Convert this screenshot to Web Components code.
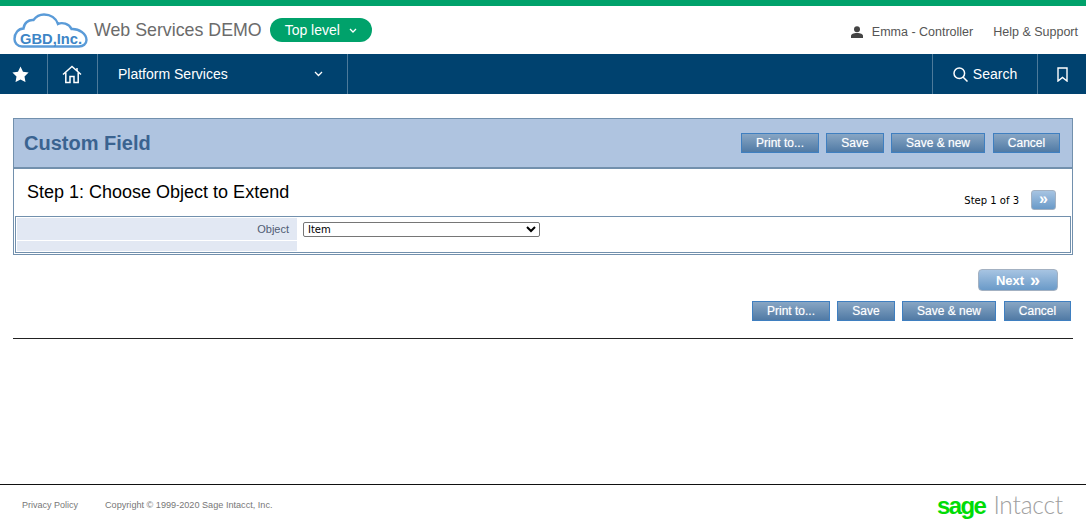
<!DOCTYPE html>
<html>
<head>
<meta charset="utf-8">
<title>Custom Field</title>
<style>
  html, body { margin: 0; height: 100%; }
  body { font-family: "Liberation Sans", Arial, sans-serif; background: #fff; }
</style>
</head>
<body>
<app-shell>
  <top-header slot="header"></top-header>
  <main-nav slot="header"></main-nav>
  <form-panel heading="Custom Field" step-title="Step 1: Choose Object to Extend" step-text="Step 1 of 3">
    <action-buttons slot="actions"></action-buttons>
    <field-row label="Object">
      <select>
        <option>Item</option>
      </select>
    </field-row>
  </form-panel>
  <form-footer>
    <next-button></next-button>
    <action-buttons></action-buttons>
  </form-footer>
  <page-footer slot="footer"></page-footer>
</app-shell>

<script>
class AppShell extends HTMLElement {
  connectedCallback() {
    this.attachShadow({ mode: 'open' });
    this.shadowRoot.innerHTML = `
      <style>
        :host { display: flex; flex-direction: column; height: 523px; overflow: hidden; }
        main { flex: 1; padding: 24px 13px 0; }
      </style>
      <slot name="header"></slot>
      <main><slot></slot></main>
      <slot name="footer"></slot>
    `;
  }
}

class TopHeader extends HTMLElement {
  connectedCallback() {
    this.attachShadow({ mode: 'open' });
    this.shadowRoot.innerHTML = `
      <style>
        :host {
          display: flex;
          align-items: center;
          height: 48px;
          border-top: 6px solid #00a26b;
          padding: 0 8px 0 13px;
          background: #fff;
          font-family: "Liberation Sans", Arial, sans-serif;
        }
        .logo { display: block; margin-top: 2px; }
        .title { margin-left: 6px; font-size: 17.800px; color: #6b6b6b; white-space: nowrap; }
        .pill {
          display: flex;
          align-items: center;
          height: 24px;
          margin-left: 8px;
          padding: 0 15px 0 15px;
          border-radius: 12px;
          background: #00a26b;
          color: #fff;
          font-size: 14px;
        }
        .pill svg { margin-left: 9px; }
        .right { margin-left: auto; display: flex; align-items: center; font-size: 12.500px; color: #555; padding-top: 3px; }
        .user { display: flex; align-items: center; margin-right: 20px; }
        .user svg { margin-right: 9px; }
      </style>
      <svg class="logo" width="75" height="36" viewBox="0 0 75 36">
        <path d="M9 33.500C4 33.500 1.500 29.500 1.500 26C1.500 20 5.500 15.500 10.500 15.500C11 10 15.500 6.500 20.500 7C23 3.500 27 1.500 31 1.500C37.500 1.500 43 5 45 11C49 9 56 10.500 58.500 16C66 15.500 73.500 21 73.500 27C73.500 31 70 33.500 66 33.500Z" fill="#fff" stroke="#5a9bd8" stroke-width="2.400"/>
        <text x="38" y="30.500" text-anchor="middle" font-family="Liberation Sans, Arial, sans-serif" font-weight="700" font-size="15.500" textLength="62" lengthAdjust="spacingAndGlyphs" fill="#3d85c6">GBD,Inc.</text>
      </svg>
      <span class="title">Web Services DEMO</span>
      <span class="pill">Top level
        <svg width="8" height="5" viewBox="0 0 8 5"><path d="M1 1l3 3 3-3" fill="none" stroke="#fff" stroke-width="1.300"/></svg>
      </span>
      <div class="right">
        <span class="user">
          <svg width="12" height="12" viewBox="0 0 12 12"><circle cx="6" cy="3.200" r="3" fill="#444"/><path d="M0 12v-2c0-2 2.500-3 6-3s6 1 6 3v2z" fill="#444"/></svg>
          Emma - Controller
        </span>
        <span>Help &amp; Support</span>
      </div>
    `;
  }
}

class MainNav extends HTMLElement {
  connectedCallback() {
    this.attachShadow({ mode: 'open' });
    this.shadowRoot.innerHTML = `
      <style>
        :host {
          display: flex;
          height: 40px;
          background: #00426f;
          color: #fff;
          font-family: "Liberation Sans", Arial, sans-serif;
          font-size: 14px;
        }
        .cell { display: flex; align-items: center; justify-content: center; border-right: 1px solid #4d7a9a; box-sizing: border-box; }
        .star { width: 48px; padding-right: 6px; }
        .home { width: 50px; padding-right: 2px; }
        .menu { width: 250px; justify-content: space-between; padding: 0 24px 0 20px; }
        .spacer { flex: 1; border-right: 1px solid #4d7a9a; }
        .search { width: 105px; }
        .search svg { margin-right: 5px; }
        .mark { width: 48px; border-right: 0; }
      </style>
      <div class="cell star">
        <svg width="17" height="16" viewBox="0 0 17 16"><path d="M8.500 .5l2.500 5.200 5.600.8-4.100 4 1 5.600-5-2.700-5 2.700 1-5.600-4.100-4 5.600-.8z" fill="#fff"/></svg>
      </div>
      <div class="cell home">
        <svg width="20" height="19" viewBox="0 0 20 19" fill="none" stroke="#fff" stroke-width="1.500"><path d="M1 9.500L10 1.500l9 8"/><path d="M3.800 7.500V17.500h4.200v-6h4v6h4.200V7.500"/><path d="M15 3v3"/></svg>
      </div>
      <div class="cell menu">
        <span>Platform Services</span>
        <svg width="9" height="6" viewBox="0 0 9 6"><path d="M1 1l3.500 3.500L8 1" fill="none" stroke="#fff" stroke-width="1.300"/></svg>
      </div>
      <div class="spacer"></div>
      <div class="cell search">
        <svg width="15" height="15" viewBox="0 0 15 15" fill="none" stroke="#fff" stroke-width="1.500"><circle cx="6.300" cy="6.300" r="5.300"/><path d="M10.200 10.200l4.300 4.300"/></svg>
        Search
      </div>
      <div class="cell mark">
        <svg width="11" height="15" viewBox="0 0 11 15"><path d="M1 1h9v13l-4.500-3.500L1 14z" fill="none" stroke="#fff" stroke-width="1.400"/></svg>
      </div>
    `;
  }
}

class FormPanel extends HTMLElement {
  connectedCallback() {
    this.attachShadow({ mode: 'open' });
    this.shadowRoot.innerHTML = `
      <style>
        :host {
          display: block;
          border: 1px solid #7290ad;
          font-family: "Liberation Sans", Arial, sans-serif;
        }
        .head {
          display: flex;
          align-items: center;
          justify-content: space-between;
          height: 48px;
          padding: 0 12px 0 10px;
          background: #afc4e0;
          border-bottom: 2px solid #7290ad;
        }
        h1 { margin: 0; font-size: 20px; font-weight: 700; color: #3a6390; }
        .step { display: flex; justify-content: space-between; height: 47px; padding: 0 16px 0 13px; }
        h2 { margin: 12px 0 0; font-size: 18px; font-weight: 400; color: #000; line-height: 22px; }
        .pager { display: flex; align-items: center; gap: 12px; margin-top: 21px; height: 20px; font-family: "DejaVu Sans", Verdana, sans-serif; font-size: 10px; color: #000; }
        .body { margin: 0 1px 1px; border: 1px solid #7290ad; }
      </style>
      <div class="head">
        <h1>${this.getAttribute('heading')}</h1>
        <slot name="actions"></slot>
      </div>
      <div class="step">
        <h2>${this.getAttribute('step-title')}</h2>
        <div class="pager">
          <span>${this.getAttribute('step-text')}</span>
          <step-arrow></step-arrow>
        </div>
      </div>
      <div class="body"><slot></slot></div>
    `;
  }
}

class StepArrow extends HTMLElement {
  connectedCallback() {
    this.attachShadow({ mode: 'open' });
    this.shadowRoot.innerHTML = `
      <style>
        :host {
          display: flex;
          align-items: center;
          justify-content: center;
          box-sizing: border-box;
          width: 25px;
          height: 20px;
          margin-top: -1px;
          border: 1px solid #a3b1c2;
          border-radius: 3px;
          background: linear-gradient(#a7c4e2, #6a9ac8);
          color: #fff;
          font: 700 16px "Liberation Sans", Arial, sans-serif;
          line-height: 16px;
        }
      </style>
      <span style="margin-top:-2px">»</span>
    `;
  }
}

class FieldRow extends HTMLElement {
  connectedCallback() {
    this.attachShadow({ mode: 'open' });
    this.shadowRoot.innerHTML = `
      <style>
        :host {
          display: grid;
          grid-template-columns: 280px 1fr;
          grid-template-rows: 22px 10px;
          row-gap: 1px;
          padding: 1px;
          font-family: "Liberation Sans", Arial, sans-serif;
        }
        .label { background: #e2e8f3; font-size: 11px; color: #505c74; text-align: right; padding: 5px 8px 0 0; box-sizing: border-box; }
        .control { padding: 4px 0 0 6px; }
        .tail { background: #e2e8f3; }
        ::slotted(select) {
          display: block;
          width: 237px;
          height: 15px;
          padding: 0;
          border: 1px solid #767676;
          border-radius: 2px;
          background: #fff;
          font: 10px "DejaVu Sans", Verdana, sans-serif;
          color: #000;
        }
      </style>
      <div class="label">${this.getAttribute('label')}</div>
      <div class="control"><slot></slot></div>
      <div class="tail"></div>
      <div></div>
    `;
  }
}

class ActionButton extends HTMLElement {
  connectedCallback() {
    this.attachShadow({ mode: 'open' });
    this.shadowRoot.innerHTML = `
      <style>
        :host {
          display: flex;
          align-items: center;
          justify-content: center;
          box-sizing: border-box;
          height: 20px;
          border: 1px solid #3f7fc0;
          background: linear-gradient(#88a6c4, #507aa5);
          color: #fff;
          font: 12px "Liberation Sans", Arial, sans-serif;
          text-shadow: 0 0 1px rgba(255,255,255,.5);
          white-space: nowrap;
        }
      </style>
      <slot></slot>
    `;
  }
}

class ActionButtons extends HTMLElement {
  connectedCallback() {
    this.attachShadow({ mode: 'open' });
    this.shadowRoot.innerHTML = `
      <style>
        :host { display: flex; gap: 7px; }
      </style>
      <action-button style="width:78px">Print to...</action-button>
      <action-button style="width:58px">Save</action-button>
      <action-button style="width:94px">Save &amp; new</action-button>
      <action-button style="width:67px;margin-left:1px">Cancel</action-button>
    `;
  }
}

class NextButton extends HTMLElement {
  connectedCallback() {
    this.attachShadow({ mode: 'open' });
    this.shadowRoot.innerHTML = `
      <style>
        :host {
          display: flex;
          align-items: center;
          justify-content: center;
          gap: 6px;
          box-sizing: border-box;
          width: 80px;
          height: 22px;
          border: 1px solid #a3b1c2;
          border-radius: 4px;
          background: linear-gradient(#a7c4e2, #6a9ac8);
          color: #fff;
          font: 700 13px "Liberation Sans", Arial, sans-serif;
        }
        span { font-size: 18px; line-height: 16px; margin-top: -1px; }
      </style>
      Next <span>»</span>
    `;
  }
}

class FormFooter extends HTMLElement {
  connectedCallback() {
    this.attachShadow({ mode: 'open' });
    this.shadowRoot.innerHTML = `
      <style>
        :host {
          display: flex;
          flex-direction: column;
          align-items: flex-end;
          margin-top: 14px;
          padding-bottom: 17px;
          border-bottom: 1px solid #222;
        }
        ::slotted(next-button) { margin-right: 15px; margin-bottom: 10px; }
        ::slotted(action-buttons) { margin-right: 2px; }
      </style>
      <slot></slot>
    `;
  }
}

class PageFooter extends HTMLElement {
  connectedCallback() {
    this.attachShadow({ mode: 'open' });
    this.shadowRoot.innerHTML = `
      <style>
        :host {
          display: flex;
          align-items: center;
          box-sizing: border-box;
          height: 39px;
          border-top: 1px solid #111;
          padding: 1px 23px 0 22px;
          font: 9px "Liberation Sans", Arial, sans-serif;
          color: #777;
        }
        .copy { margin-left: 27px; font-size: 9.150px; }
        .brand { margin-left: auto; display: flex; align-items: baseline; line-height: 30px; margin-top: 2px; }
        .sage { font-size: 24px; font-weight: 700; color: #00dc06; letter-spacing: -1.600px; }
        .intacct { margin-left: 8px; font-size: 24.500px; font-family: Lato, sans-serif; font-weight: 300; color: #a0a0a0; letter-spacing: -.2px; }
      </style>
      <span>Privacy Policy</span>
      <span class="copy">Copyright © 1999-2020 Sage Intacct, Inc.</span>
      <div class="brand"><span class="sage">sage</span><span class="intacct">Intacct</span></div>
    `;
  }
}

customElements.define('app-shell', AppShell);
customElements.define('top-header', TopHeader);
customElements.define('main-nav', MainNav);
customElements.define('form-panel', FormPanel);
customElements.define('step-arrow', StepArrow);
customElements.define('field-row', FieldRow);
customElements.define('action-button', ActionButton);
customElements.define('action-buttons', ActionButtons);
customElements.define('next-button', NextButton);
customElements.define('form-footer', FormFooter);
customElements.define('page-footer', PageFooter);
</script>
</body>
</html>
